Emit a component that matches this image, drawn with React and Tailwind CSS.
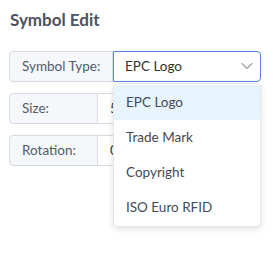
import { ChevronDown } from "lucide-react";

const options = ["EPC Logo", "Trade Mark", "Copyright", "ISO Euro RFID"];

function Row({ label, labelW, value, children }) {
  return (
    <div className="flex h-[31px]">
      <div
        className={`${labelW} shrink-0 flex items-center pl-[12px] whitespace-nowrap bg-[#f6f7fb] border border-[#d6dae3] rounded-l-[4px] text-[13.5px] text-[#555a66]`}
      >
        {label}
      </div>
      {children || (
        <div className="flex-1 flex items-center px-[12px] border border-l-0 border-[#d6dae3] rounded-r-[4px] text-[13.5px] text-[#333]">
          {value}
        </div>
      )}
    </div>
  );
}

export default function App() {
  return (
    <div
      className="w-[273px] h-[273px] bg-white relative"
      style={{ fontFamily: "Lato, 'Open Sans', sans-serif" }}
    >
      <h1 className="pl-[10px] pt-[7px] text-[17px] font-bold text-[#4d5260]">Symbol Edit</h1>

      <div className="mt-[18px] ml-[9px] w-[252px] flex flex-col gap-[11px]">
        <Row label="Symbol Type:" labelW="w-[104px]">
          <div className="flex-1 flex items-center justify-between pl-[11px] pr-[3px] border border-[#5b8bd8] rounded-r-[4px] text-[13.5px] text-[#333]">
            <span>EPC Logo</span>
            <ChevronDown className="w-[20px] h-[20px] text-[#9aa0aa]" strokeWidth={1.3} />
          </div>
        </Row>
        <Row label="Size:" labelW="w-[89px]" value="5" />
        <Row label="Rotation:" labelW="w-[89px]" value="0" />
      </div>

      {/* dropdown menu */}
      <div className="absolute left-[113px] top-[83px] w-[148px] bg-white border border-[#e4e7ec] rounded-[4px] shadow-[0_2px_6px_rgba(0,0,0,0.12)] py-[1px]">
        {options.map((o, i) => (
          <div
            key={o}
            className={`h-[35px] flex items-center pl-[12px] text-[13.5px] text-[#444a55] rounded-[3px] ${i === 0 ? "bg-[#e7f3fd]" : ""}`}
          >
            {o}
          </div>
        ))}
      </div>
    </div>
  );
}
